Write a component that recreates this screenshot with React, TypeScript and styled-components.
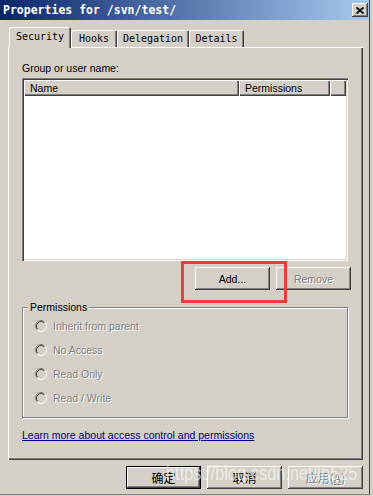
import styled, { createGlobalStyle } from "styled-components";

const GlobalStyle = createGlobalStyle`
  body {
    margin: 0;
    background: #d4d0c8;
  }
`;

const Window = styled.div`
  position: relative;
  width: 370px;
  height: 495px;
  box-sizing: border-box;
  background: #d4d0c8;
  border-right: 1px solid #404040;
  border-bottom: 1px solid #808080;
  display: flex;
  flex-direction: column;
  overflow: hidden;
  font-family: "Liberation Sans", Arial, sans-serif;
  font-size: 10.5px;
  color: #000;
`;

const TitleBar = styled.div`
  height: 20px;
  display: flex;
  align-items: center;
  justify-content: space-between;
  padding: 0 1px 0 3px;
  background: linear-gradient(to right, #0a246a, #a6caf0);
`;

const Title = styled.span`
  font-family: "DejaVu Sans Mono", "Liberation Mono", monospace;
  font-weight: bold;
  font-size: 11.5px;
  color: #fff;
`;

const CloseButton = styled.div`
  width: 16px;
  height: 14px;
  display: flex;
  align-items: center;
  justify-content: center;
  background: #d4d0c8;
  box-shadow: inset -1px -1px #404040, inset 1px 1px #fff, inset -2px -2px #808080;
`;

const TabStrip = styled.div`
  height: 27px;
  display: flex;
  align-items: flex-end;
  padding-left: 9px;
  position: relative;
  z-index: 1;
`;

const Tab = styled.div<{ $active?: boolean; $w: number }>`
  width: ${(p) => p.$w}px;
  height: ${(p) => (p.$active ? 21 : 17)}px;
  margin-bottom: ${(p) => (p.$active ? -1 : 0)}px;
  box-sizing: border-box;
  display: flex;
  align-items: center;
  justify-content: center;
  padding-bottom: ${(p) => (p.$active ? 2 : 0)}px;
  background: #d4d0c8;
  border-top-left-radius: 2px;
  border-top-right-radius: 2px;
  box-shadow: inset 1px 1px #fff, inset -1px 0 #404040, inset -2px 0 #808080;
  font-family: "DejaVu Sans Mono", "Liberation Mono", monospace;
  font-size: 10px;
`;

const Panel = styled.div`
  margin-left: 8px;
  width: 355px;
  height: 413px;
  box-sizing: border-box;
  padding: 15px 12px 0 14px;
  box-shadow: inset 1px 1px #fff, inset -1px -1px #404040, inset -2px -2px #808080;
  display: flex;
  flex-direction: column;
`;

const Label = styled.div`
  line-height: 13px;
`;

const ListBox = styled.div`
  margin-top: 3px;
  width: 326px;
  height: 183px;
  box-sizing: border-box;
  padding: 2px;
  background: #fff;
  box-shadow: inset 1px 1px #808080, inset 2px 2px #404040, inset -1px -1px #fff,
    inset -2px -2px #d4d0c8;
`;

const ListHeader = styled.div`
  display: flex;
  height: 16px;
`;

const HeaderCell = styled.div<{ $w?: number }>`
  ${(p) => (p.$w ? `width: ${p.$w}px;` : "flex: 1;")}
  box-sizing: border-box;
  display: flex;
  align-items: center;
  padding-left: 6px;
  background: #d4d0c8;
  box-shadow: inset 1px 1px #fff, inset -1px -1px #404040, inset -2px -2px #808080;
`;

const ButtonRow = styled.div`
  margin-top: 6px;
  display: flex;
  justify-content: flex-end;
  gap: 6px;
`;

const Button = styled.button<{ $default?: boolean; $cjk?: boolean }>`
  width: 75px;
  height: 23px;
  padding: 0;
  border: none;
  background: #d4d0c8;
  font-family: ${(p) =>
    p.$cjk ? `"Noto Sans CJK SC", "Liberation Sans", sans-serif` : `"Liberation Sans", Arial, sans-serif`};
  font-size: ${(p) => (p.$cjk ? 12 : 10.5)}px;
  color: ${(p) => (p.disabled ? "#808080" : "#000")};
  text-shadow: ${(p) => (p.disabled ? "1px 1px 0 #fff" : "none")};
  box-shadow: ${(p) =>
    p.$default
      ? "inset 0 0 0 1px #000, inset -2px -2px #404040, inset 2px 2px #fff, inset -3px -3px #808080"
      : "inset -1px -1px #404040, inset 1px 1px #fff, inset -2px -2px #808080"};
`;

const Highlight = styled.div`
  position: relative;

  &::after {
    content: "";
    position: absolute;
    top: -6px;
    left: -14px;
    right: -17px;
    bottom: -13px;
    border: 3px solid #ef3b3b;
    pointer-events: none;
  }
`;

const GroupBox = styled.div`
  position: relative;
  margin-top: 17px;
  width: 326px;
  height: 111px;
  box-sizing: border-box;
  padding: 6px 0 0 12px;
  border: 1px solid #808080;
  box-shadow: inset 1px 1px #fff, 1px 1px #fff;
  display: flex;
  flex-direction: column;
`;

const Legend = styled.span`
  position: absolute;
  top: -7px;
  left: 5px;
  padding: 0 2px;
  line-height: 13px;
  background: #d4d0c8;
`;

const RadioRow = styled.div`
  height: 24px;
  display: flex;
  align-items: center;
  gap: 6px;
  color: #808080;
  text-shadow: 1px 1px 0 #fff;
`;

const Link = styled.a`
  margin-top: 11px;
  line-height: 13px;
  color: #000080;
  text-decoration: underline;
  cursor: pointer;
`;

const Footer = styled.div`
  margin-top: 6px;
  padding-right: 6px;
  display: flex;
  justify-content: flex-end;
  gap: 6px;
`;

const Watermark = styled.div`
  position: absolute;
  left: 166px;
  top: 462px;
  font-family: "Liberation Sans", sans-serif;
  font-size: 20px;
  color: rgba(255, 255, 255, 0.6);
  transform: scaleX(0.82);
  transform-origin: left center;
  pointer-events: none;
  white-space: nowrap;
`;

function Radio() {
  return (
    <svg width="12" height="12" viewBox="0 0 12 12">
      <circle cx="6" cy="6" r="5" fill="#d4d0c8" />
      <path d="M9.89 2.11 A5.5 5.5 0 0 0 2.11 9.89" stroke="#808080" fill="none" />
      <path d="M9.18 2.82 A4.5 4.5 0 0 0 2.82 9.18" stroke="#404040" fill="none" />
      <path d="M2.11 9.89 A5.5 5.5 0 0 0 9.89 2.11" stroke="#fff" fill="none" />
    </svg>
  );
}

const options = ["Inherit from parent", "No Access", "Read Only", "Read / Write"];

export default function App() {
  return (
    <>
      <GlobalStyle />
      <Window>
        <TitleBar>
          <Title>Properties for /svn/test/</Title>
          <CloseButton>
            <svg width="8" height="7" viewBox="0 0 8 7">
              <path d="M0.5 0.5 L7.5 6.5 M7.5 0.5 L0.5 6.5" stroke="#000" strokeWidth="1.7" />
            </svg>
          </CloseButton>
        </TitleBar>
        <TabStrip>
          <Tab $active $w={62}>Security</Tab>
          <Tab $w={46}>Hooks</Tab>
          <Tab $w={72}>Delegation</Tab>
          <Tab $w={55}>Details</Tab>
        </TabStrip>
        <Panel>
          <Label>Group or user name:</Label>
          <ListBox>
            <ListHeader>
              <HeaderCell $w={215}>Name</HeaderCell>
              <HeaderCell $w={91}>Permissions</HeaderCell>
              <HeaderCell />
            </ListHeader>
          </ListBox>
          <ButtonRow>
            <Highlight>
              <Button>Add...</Button>
            </Highlight>
            <Button disabled>Remove</Button>
          </ButtonRow>
          <GroupBox>
            <Legend>Permissions</Legend>
            {options.map((o) => (
              <RadioRow key={o}>
                <Radio />
                {o}
              </RadioRow>
            ))}
          </GroupBox>
          <Link>Learn more about access control and permissions</Link>
        </Panel>
        <Footer>
          <Button $default $cjk>确定</Button>
          <Button $cjk>取消</Button>
          <Button $cjk disabled>
            应用(<u>A</u>)
          </Button>
        </Footer>
        <Watermark>https://blog.csdn.net/lh525</Watermark>
      </Window>
    </>
  );
}
